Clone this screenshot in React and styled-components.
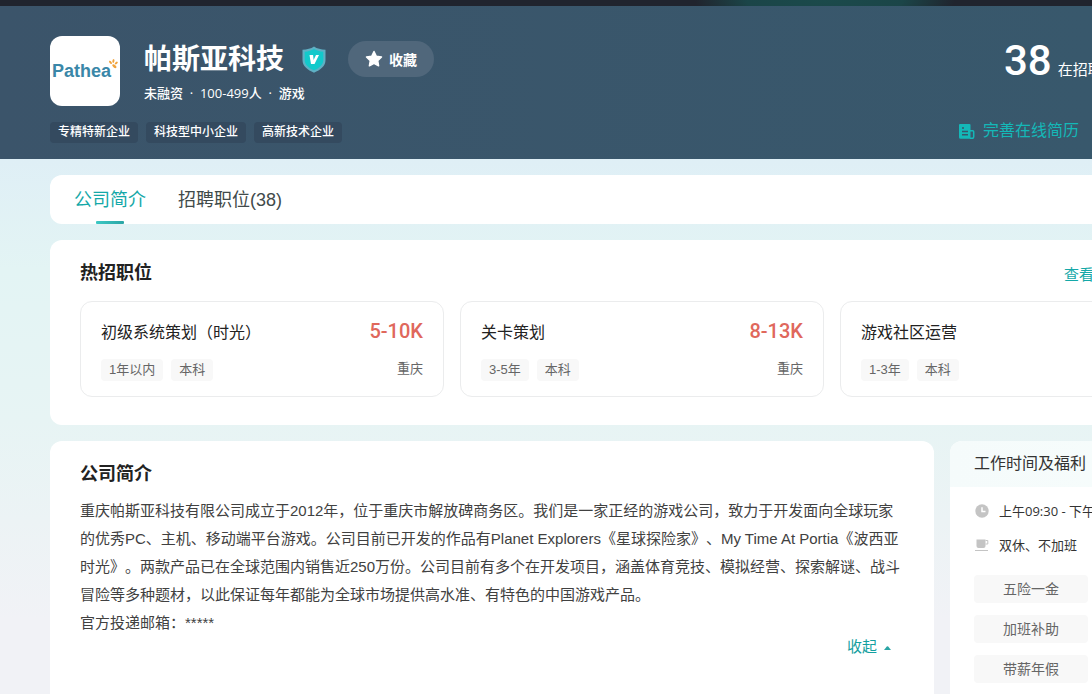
import React, { useState } from 'react';
import styled, { createGlobalStyle } from 'styled-components';

const GlobalStyle = createGlobalStyle`
  * {
    box-sizing: border-box;
  }

  body {
    margin: 0;
    overflow-x: hidden;
    font-family: 'Liberation Sans', 'Noto Sans CJK SC', sans-serif;
    color: #333;
    background: #f2f2f8;
  }

  h1, h2, h3, p, ul {
    margin: 0;
    padding: 0;
  }

  ul {
    list-style: none;
  }

  button {
    font-family: inherit;
    border: none;
    cursor: pointer;
  }

  a {
    text-decoration: none;
  }
`;

const Page = styled.div`
  min-height: 100vh;
  overflow: hidden;
  background: linear-gradient(180deg, #dfeef7 0, #dfeff6 160px, #e3f4f4 270px, #e7f4f4 420px, #f1f2f6 620px);
`;

const TopBar = styled.div`
  height: 6px;
  background: radial-gradient(ellipse 130px 30px at 825px 0, #1b4a4b, #1b4548 60%, #20242e);
`;

const Container = styled.div`
  min-width: 1184px;
  max-width: 1184px;
  margin: 0 50px;
`;

const Banner = styled.header`
  background: linear-gradient(90deg, #3b546a, #38586c);
`;

const BannerInner = styled(Container)`
  display: flex;
  justify-content: space-between;
  padding: 30px 0 16px;
`;

const Company = styled.div`
  display: flex;
  gap: 24px;
`;

const Logo = styled.div`
  width: 70px;
  height: 70px;
  border-radius: 12px;
  background: #fff;
  display: flex;
  align-items: center;
  justify-content: center;
`;

const NameRow = styled.div`
  display: flex;
  align-items: center;
  height: 46px;
`;

const CompanyName = styled.h1`
  padding-top: 2px;
  font-size: 28px;
  line-height: 40px;
  font-weight: 700;
  color: #fff;
  margin-right: 18px;
`;

const FavButton = styled.button`
  display: flex;
  align-items: center;
  justify-content: center;
  gap: 6px;
  width: 86px;
  height: 36px;
  margin-left: 22px;
  padding: 0;
  border-radius: 18px;
  background: #50677b;
  color: #fff;
  font-size: 14px;
  font-weight: 700;
`;

const Meta = styled.p`
  font-family: 'Open Sans', 'Noto Sans CJK SC', sans-serif;
  font-size: 13px;
  line-height: 20px;
  font-weight: 500;
  color: #fff;
  margin-top: 1px;
`;

const HonorList = styled.ul`
  display: flex;
  gap: 8px;
  margin-top: 16px;
`;

const Honor = styled.li`
  padding: 0 8px;
  border-radius: 4px;
  background: #344a5f;
  color: #fff;
  font-size: 12px;
  font-weight: 500;
  line-height: 21px;
`;

const BannerSide = styled.div`
  width: 276px;
  display: flex;
  flex-direction: column;
  justify-content: space-between;
`;

const JobCount = styled.p`
  display: flex;
  align-items: baseline;
  gap: 6px;
  padding-left: 46px;
  color: #fff;
  font-size: 15px;
  line-height: 50px;
  white-space: nowrap;
`;

const CountNumber = styled.span`
  font-family: Roboto, sans-serif;
  font-size: 42px;
  font-weight: 500;
`;

const ResumeLink = styled.a`
  display: flex;
  align-items: center;
  gap: 8px;
  color: #14b8b8;
  font-size: 16px;
  line-height: 24px;
`;

const Panel = styled.section`
  background: #fff;
  border-radius: 12px;
  margin-top: 16px;
`;

const TabBar = styled(Panel)`
  display: flex;
  gap: 32px;
  height: 49px;
  padding: 0 24px;
`;

const Tab = styled.button`
  position: relative;
  padding: 0;
  background: none;
  font-size: 18px;
  line-height: 48px;
  color: ${(props) => (props.$active ? '#14a8a8' : '#414a4a')};

  &::after {
    content: '';
    display: ${(props) => (props.$active ? 'block' : 'none')};
    position: absolute;
    left: 50%;
    bottom: 0;
    width: 28px;
    height: 3px;
    margin-left: -14px;
    border-radius: 1px;
    background: linear-gradient(90deg, #3cc8c4, #2aa5a5);
  }
`;

const JobsPanel = styled(Panel)`
  padding: 18px 30px 28px;
`;

const PanelHead = styled.div`
  display: flex;
  justify-content: space-between;
  align-items: center;
`;

const PanelTitle = styled.h2`
  font-size: 18px;
  line-height: 30px;
  font-weight: 700;
  color: #222;
`;

const MoreLink = styled.a`
  width: 140px;
  padding-top: 4px;
  color: #14a8a8;
  font-size: 15px;
  line-height: 24px;
`;

const JobGrid = styled.div`
  display: grid;
  grid-template-columns: repeat(3, 1fr);
  gap: 16px;
  margin-top: 13px;
`;

const JobCard = styled.article`
  padding: 15px 20px;
  border: 1px solid #ebeced;
  border-radius: 12px;
`;

const JobRow = styled.div`
  display: flex;
  justify-content: space-between;
  align-items: flex-start;

  & + & {
    margin-top: 10px;
  }
`;

const JobTitle = styled.h3`
  font-size: 16px;
  line-height: 32px;
  font-weight: 400;
  color: #222;
`;

const Salary = styled.span`
  font-family: Roboto, sans-serif;
  font-size: 20px;
  line-height: 28px;
  font-weight: 500;
  color: #e0685c;
`;

const TagList = styled.ul`
  display: flex;
  gap: 8px;
`;

const Tag = styled.li`
  padding: 0 8px;
  border-radius: 4px;
  background: #f8f8f8;
  color: #666;
  font-size: 13px;
  line-height: 22px;
`;

const City = styled.span`
  color: #666;
  font-size: 13px;
  line-height: 20px;
`;

const Columns = styled.div`
  display: flex;
  gap: 16px;
`;

const IntroPanel = styled(Panel)`
  flex: 1;
  min-height: 320px;
  padding: 18px 30px;
`;

const IntroText = styled.p`
  margin-top: 8px;
  color: #414141;
  font-size: 15px;
  line-height: 28px;
  white-space: pre-line;
  text-spacing-trim: space-all;
`;

const CollapseButton = styled.button`
  display: flex;
  align-items: center;
  gap: 6px;
  margin: 0 12px 0 auto;
  padding: 0;
  background: none;
  color: #14a0a0;
  font-size: 15px;
  line-height: 20px;
`;

const SidePanel = styled(Panel)`
  width: 284px;
  overflow: hidden;
`;

const SideTitle = styled.h2`
  padding: 0 24px;
  background: linear-gradient(90deg, #f5fbfb, #f7fdfc);
  color: #333;
  font-size: 16px;
  line-height: 46px;
  font-weight: 400;
`;

const SideBody = styled.div`
  padding: 13px 24px;
`;

const InfoRow = styled.p`
  display: flex;
  align-items: center;
  gap: 9px;
  font-family: 'Open Sans', 'Noto Sans CJK SC', sans-serif;
  color: #333;
  font-size: 13px;
  line-height: 22px;
  white-space: nowrap;

  & + & {
    margin-top: 12px;
  }
`;

const WelfareList = styled.ul`
  display: grid;
  grid-template-columns: repeat(2, 1fr);
  gap: 12px 8px;
  margin-top: 19px;
`;

const Welfare = styled.li`
  grid-column: 1;
  border-radius: 4px;
  background: #f8f8f8;
  color: #666;
  font-size: 14px;
  line-height: 28px;
  text-align: center;
`;

const jobs = [
  { title: '初级系统策划（时光）', salary: '5-10K', tags: ['1年以内', '本科'], city: '重庆' },
  { title: '关卡策划', salary: '8-13K', tags: ['3-5年', '本科'], city: '重庆' },
  { title: '游戏社区运营', tags: ['1-3年', '本科'] },
];

const honors = ['专精特新企业', '科技型中小企业', '高新技术企业'];

const welfare = ['五险一金', '加班补助', '带薪年假'];

const intro = `重庆帕斯亚科技有限公司成立于2012年，位于重庆市解放碑商务区。我们是一家正经的游戏公司，致力于开发面向全球玩家的优秀PC、主机、移动端平台游戏。公司目前已开发的作品有Planet Explorers《星球探险家》、My Time At Portia《波西亚时光》。两款产品已在全球范围内销售近250万份。公司目前有多个在开发项目，涵盖体育竞技、模拟经营、探索解谜、战斗冒险等多种题材，以此保证每年都能为全球市场提供高水准、有特色的中国游戏产品。`;

const contact = '官方投递邮箱：*****';

const LogoText = styled.span`
  font-family: 'Liberation Sans', sans-serif;
  font-size: 18px;
  line-height: 24px;
  font-weight: 700;
  color: #3a87a8;
`;

const Paw = styled.svg`
  flex: none;
  margin: 0 0 14px -2px;
`;

const LogoPaw = () => (
  <Paw width="9" height="10" viewBox="0 0 9 10" fill="#f0a33c">
    <ellipse cx="1.500" cy="3.400" rx="1" ry="1.900" transform="rotate(-35 1.500 3.400)" />
    <ellipse cx="4.400" cy="2" rx="1" ry="1.900" transform="rotate(10 4.400 2)" />
    <ellipse cx="7.300" cy="4" rx="1" ry="1.700" transform="rotate(50 7.300 4)" />
    <ellipse cx="5.400" cy="7.200" rx="2.500" ry="1.400" transform="rotate(40 5.400 7.200)" />
  </Paw>
);

const ShieldIcon = () => (
  <svg width="24" height="27" viewBox="0 0 24 27">
    <path d="M12 .5c3 2.200 7 3 11.500 3.200V14c0 6-5 10-11.500 12.700C5.500 24 .5 20 .5 14V3.700C5 3.500 9 2.700 12 .5z" fill="#5fb0c4" />
    <path d="M12 3c2.600 1.700 5.600 2.400 9.300 2.700V14c0 4.700-4 8-9.300 10.300C6.700 22 2.700 18.700 2.700 14V5.700C6.400 5.400 9.400 4.700 12 3z" fill="#12c9cb" />
    <path d="M7.500 9h3.600l.5 4.900L14 9h3l-4.500 9H9z" fill="#fff" />
  </svg>
);

const StarIcon = () => (
  <svg width="18" height="18" viewBox="0 0 18 18" fill="#fff" stroke="#fff" strokeWidth="1.500" strokeLinejoin="round">
    <path d="M9 1.500l2.300 4.800 5.200.7-3.800 3.600.9 5.200L9 13.300l-4.600 2.500.9-5.200L1.500 7l5.200-.7z" />
  </svg>
);

const ResumeIcon = () => (
  <svg width="17" height="17" viewBox="0 0 17 17">
    <path d="M2 1h9.500a1 1 0 011 1v13.800H2.500A1.500 1.500 0 011 14.300V2a1 1 0 011-1z" fill="#14b8b8" />
    <path d="M12 7.800h2.700a1 1 0 011 1v5a1.500 1.500 0 01-1.500 1.500H12" fill="none" stroke="#14b8b8" strokeWidth="1.500" />
    <path d="M4 5h2M4 8.500h6M4 11.800h6" stroke="#38566b" strokeWidth="1.400" />
  </svg>
);

const ClockIcon = () => (
  <svg width="16" height="16" viewBox="0 0 16 16">
    <circle cx="8" cy="8" r="6.700" fill="#c4c4c4" />
    <path d="M8 4.200V8.500h3.500" fill="none" stroke="#fff" strokeWidth="1.500" />
  </svg>
);

const CupIcon = () => (
  <svg width="16" height="16" viewBox="0 0 16 16" fill="#c4c4c4">
    <path d="M2.500 2.500h9V9a2 2 0 01-2 2h-5a2 2 0 01-2-2z" />
    <path d="M11.500 3.500h2.300V7h-2.300" fill="none" stroke="#c4c4c4" />
    <path d="M1 13h13v1H1z" />
  </svg>
);

const ArrowUp = () => (
  <svg width="9" height="5" viewBox="0 0 9 5" fill="#2aa5a5">
    <path d="M1 5l2.800-3.500a1 1 0 011.400 0L8 5z" />
  </svg>
);

const App = () => {
  const [tab, setTab] = useState('intro');
  const [open, setOpen] = useState(true);

  return (
    <>
      <GlobalStyle />
      <Page>
        <TopBar />
        <Banner>
          <BannerInner>
            <div>
              <Company>
                <Logo>
                  <LogoText>Pathea</LogoText>
                  <LogoPaw />
                </Logo>
                <div>
                  <NameRow>
                    <CompanyName>帕斯亚科技</CompanyName>
                    <ShieldIcon />
                    <FavButton>
                      <StarIcon />
                      收藏
                    </FavButton>
                  </NameRow>
                  <Meta>未融资 &nbsp;·&nbsp; 100-499人 &nbsp;·&nbsp; 游戏</Meta>
                </div>
              </Company>
              <HonorList>
                {honors.map((honor) => (
                  <Honor key={honor}>{honor}</Honor>
                ))}
              </HonorList>
            </div>
            <BannerSide>
              <JobCount>
                <CountNumber>38</CountNumber>
                在招聘
              </JobCount>
              <ResumeLink href="#resume">
                <ResumeIcon />
                完善在线简历
              </ResumeLink>
            </BannerSide>
          </BannerInner>
        </Banner>
        <Container>
          <TabBar as="nav">
            <Tab $active={tab === 'intro'} onClick={() => setTab('intro')}>公司简介</Tab>
            <Tab $active={tab === 'jobs'} onClick={() => setTab('jobs')}>招聘职位(38)</Tab>
          </TabBar>
          <JobsPanel>
            <PanelHead>
              <PanelTitle>热招职位</PanelTitle>
              <MoreLink href="#jobs">查看</MoreLink>
            </PanelHead>
            <JobGrid>
              {jobs.map((job) => (
                <JobCard key={job.title}>
                  <JobRow>
                    <JobTitle>{job.title}</JobTitle>
                    {job.salary && <Salary>{job.salary}</Salary>}
                  </JobRow>
                  <JobRow>
                    <TagList>
                      {job.tags.map((tag) => (
                        <Tag key={tag}>{tag}</Tag>
                      ))}
                    </TagList>
                    {job.city && <City>{job.city}</City>}
                  </JobRow>
                </JobCard>
              ))}
            </JobGrid>
          </JobsPanel>
          <Columns>
            <IntroPanel>
              <PanelTitle>公司简介</PanelTitle>
              <IntroText>
                {intro}
                {open && `\n${contact}`}
              </IntroText>
              <CollapseButton onClick={() => setOpen(!open)}>
                收起
                <ArrowUp />
              </CollapseButton>
            </IntroPanel>
            <SidePanel as="aside">
              <SideTitle>工作时间及福利</SideTitle>
              <SideBody>
                <InfoRow>
                  <ClockIcon />
                  上午09:30 - 下午
                </InfoRow>
                <InfoRow>
                  <CupIcon />
                  双休、不加班
                </InfoRow>
                <WelfareList>
                  {welfare.map((item) => (
                    <Welfare key={item}>{item}</Welfare>
                  ))}
                </WelfareList>
              </SideBody>
            </SidePanel>
          </Columns>
        </Container>
      </Page>
    </>
  );
};

export default App;
